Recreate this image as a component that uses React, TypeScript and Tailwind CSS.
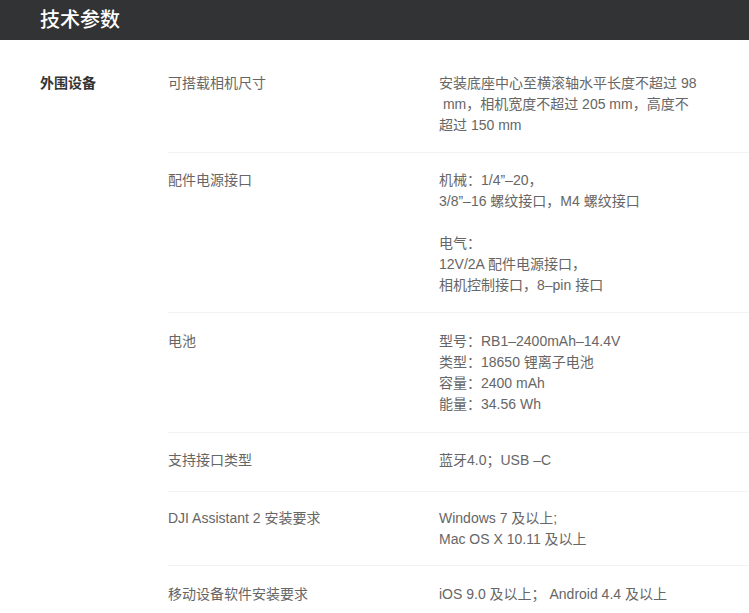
import React from "react";

interface Row {
	label: string;
	lines: string[];
	className: string;
}

const rows: Row[] = [
	{
		label: "可搭载相机尺寸",
		lines: [
			"安装底座中心至横滚轴水平长度不超过 98",
			"\u00a0mm，相机宽度不超过 205 mm，高度不",
			"超过 150 mm",
		],
		className: "pt-[18px] pb-[16px]",
	},
	{
		label: "配件电源接口",
		lines: [
			"机械：1/4”–20，",
			"3/8”–16 螺纹接口，M4 螺纹接口",
			"",
			"电气：",
			"12V/2A 配件电源接口，",
			"相机控制接口，8–pin 接口",
		],
		className: "pt-[17px] pb-[16px]",
	},
	{
		label: "电池",
		lines: [
			"型号：RB1–2400mAh–14.4V",
			"类型：18650 锂离子电池",
			"容量：2400 mAh",
			"能量：34.56 Wh",
		],
		className: "pt-[18px] pb-[17px]",
	},
	{
		label: "支持接口类型",
		lines: ["蓝牙4.0；USB –C"],
		className: "pt-[17px] pb-[20px]",
	},
	{
		label: "DJI Assistant 2 安装要求",
		lines: ["Windows 7 及以上;", "Mac OS X 10.11 及以上"],
		className: "pt-[16px] pb-[15px]",
	},
	{
		label: "移动设备软件安装要求",
		lines: ["iOS 9.0 及以上； Android 4.4 及以上"],
		className: "pt-[18px] pb-[17px]",
	},
];

const App = () => {
	return (
		<div
			className="min-h-[613px] w-full bg-white"
			style={{ fontFamily: '"Liberation Sans", "Noto Sans CJK SC", sans-serif' }}
		>
			<div className="flex h-10 items-center bg-[#323335] px-10">
				<h1 className="text-[20px] font-medium leading-none text-white">技术参数</h1>
			</div>
			<div className="flex pt-[15px]">
				<div className="w-[168px] shrink-0 pl-10 pt-[18px] text-[14px] font-bold leading-[21px] text-[#333]">
					外围设备
				</div>
				<div className="flex-1">
					{rows.map((row, index) => (
						<div
							key={row.label}
							className={`flex text-[14px] leading-[21px] text-[#666] ${row.className} ${
								index < rows.length - 1 ? "border-b border-[#f2f2f2]" : ""
							}`}
						>
							<div className="w-[271px] shrink-0">{row.label}</div>
							<div className="w-[270px]">
								{row.lines.map((line, i) => (
									<div key={i} className="h-[21px] whitespace-pre">
										{line}
									</div>
								))}
							</div>
						</div>
					))}
				</div>
			</div>
		</div>
	);
};

export default App;
